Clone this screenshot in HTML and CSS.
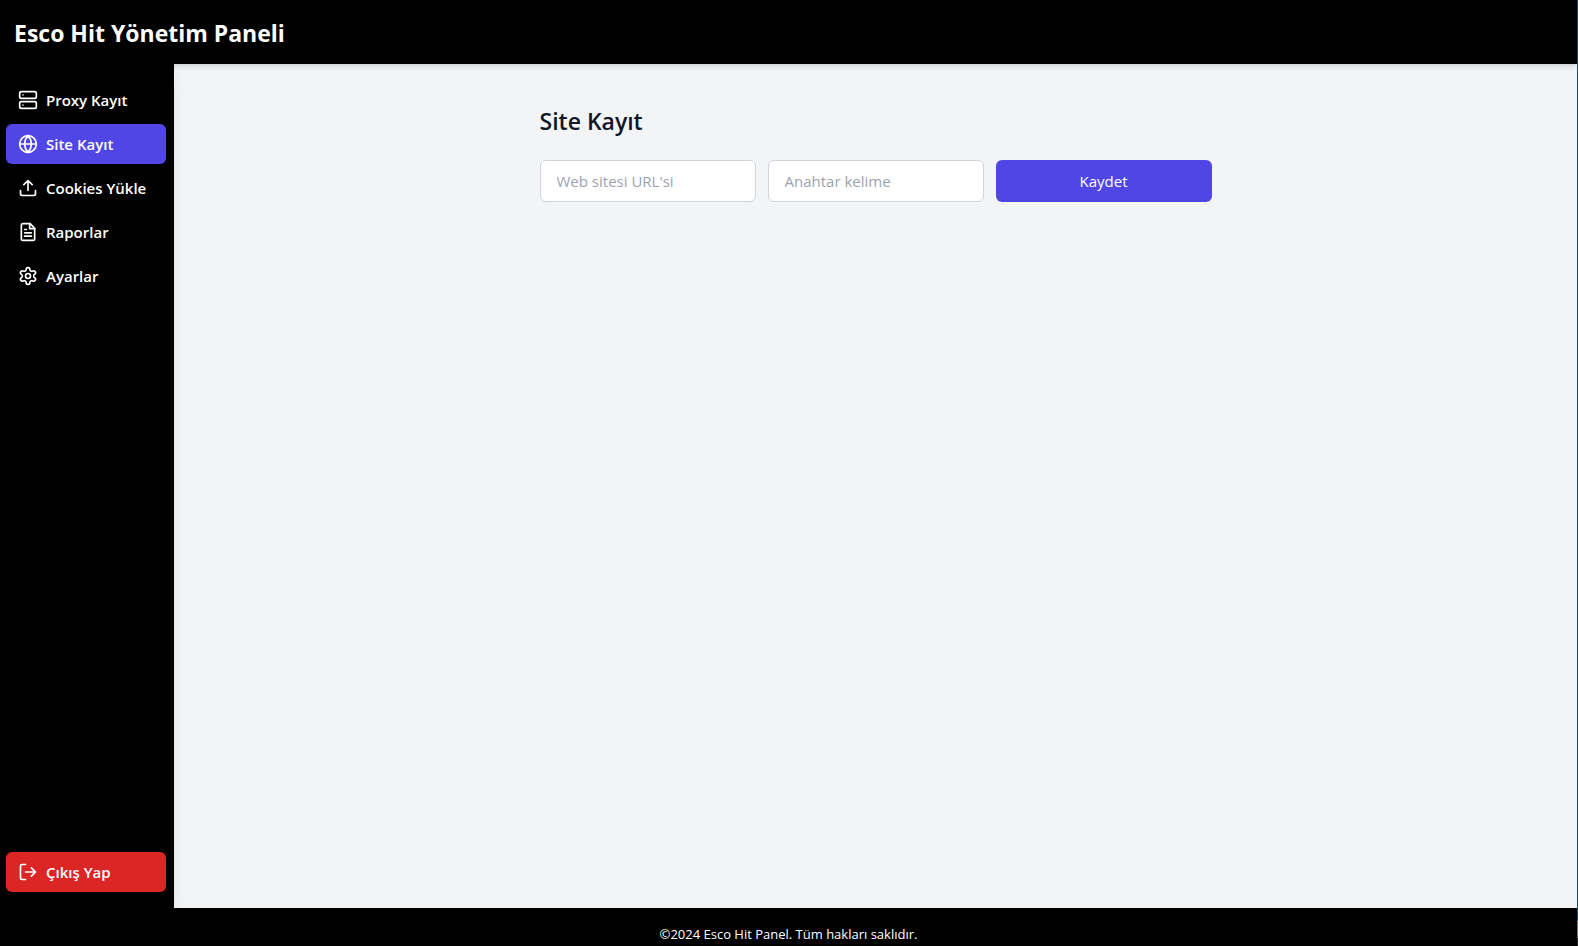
FILE: index.html
```html
<!DOCTYPE html>
<html lang="tr">
<head>
<meta charset="utf-8">
<title>Esco Hit Yönetim Paneli</title>
<link rel="stylesheet" href="styles.css">
</head>
<body>
<div class="app">
  <header class="header"><h1 class="brand">Esco Hit Yönetim Paneli</h1></header>
  <div class="body">
    <aside class="sidebar">
      <nav class="nav">
        <a class="item" href="#proxy"><svg class="icon" viewBox="0 0 24 24"><rect x="2" y="2" width="20" height="8" rx="2"/><rect x="2" y="14" width="20" height="8" rx="2"/><path d="M6 6h.01M6 18h.01"/></svg>Proxy Kayıt</a>
        <a class="item active" href="#site"><svg class="icon" viewBox="0 0 24 24"><circle cx="12" cy="12" r="10"/><path d="M12 2a14.5 14.5 0 0 0 0 20 14.5 14.5 0 0 0 0-20M2 12h20"/></svg>Site Kayıt</a>
        <a class="item" href="#cookies"><svg class="icon" viewBox="0 0 24 24"><path d="M21 15v4a2 2 0 0 1-2 2H5a2 2 0 0 1-2-2v-4M17 8l-5-5-5 5M12 3v12"/></svg>Cookies Yükle</a>
        <a class="item" href="#raporlar"><svg class="icon" viewBox="0 0 24 24"><path d="M14.5 2H6a2 2 0 0 0-2 2v16a2 2 0 0 0 2 2h12a2 2 0 0 0 2-2V7.5L14.5 2z"/><path d="M14 2v6h6M10 9H8M16 13H8M16 17H8"/></svg>Raporlar</a>
        <a class="item" href="#ayarlar"><svg class="icon" viewBox="0 0 24 24"><path d="M12.22 2h-.44a2 2 0 0 0-2 2v.18a2 2 0 0 1-1 1.73l-.43.25a2 2 0 0 1-2 0l-.15-.08a2 2 0 0 0-2.73.73l-.22.38a2 2 0 0 0 .73 2.73l.15.1a2 2 0 0 1 1 1.72v.51a2 2 0 0 1-1 1.74l-.15.09a2 2 0 0 0-.73 2.73l.22.38a2 2 0 0 0 2.73.73l.15-.08a2 2 0 0 1 2 0l.43.25a2 2 0 0 1 1 1.73V20a2 2 0 0 0 2 2h.44a2 2 0 0 0 2-2v-.18a2 2 0 0 1 1-1.73l.43-.25a2 2 0 0 1 2 0l.15.08a2 2 0 0 0 2.73-.73l.22-.39a2 2 0 0 0-.73-2.73l-.15-.08a2 2 0 0 1-1-1.74v-.5a2 2 0 0 1 1-1.74l.15-.09a2 2 0 0 0 .73-2.73l-.22-.38a2 2 0 0 0-2.73-.73l-.15.08a2 2 0 0 1-2 0l-.43-.25a2 2 0 0 1-1-1.73V4a2 2 0 0 0-2-2z"/><circle cx="12" cy="12" r="3"/></svg>Ayarlar</a>
      </nav>
      <button class="item logout" type="button"><svg class="icon" viewBox="0 0 24 24"><path d="M9 21H5a2 2 0 0 1-2-2V5a2 2 0 0 1 2-2h4M16 17l5-5-5-5M21 12H9"/></svg>Çıkış Yap</button>
    </aside>
    <main class="main">
      <section class="panel">
        <h2 class="title">Site Kayıt</h2>
        <form class="form">
          <input class="field" type="text" placeholder="Web sitesi URL'si" aria-label="Web sitesi URL'si">
          <input class="field" type="text" placeholder="Anahtar kelime" aria-label="Anahtar kelime">
          <button class="save" type="button">Kaydet</button>
        </form>
      </section>
    </main>
  </div>
  <footer class="footer">©2024 Esco Hit Panel. Tüm hakları saklıdır.</footer>
</div>
</body>
</html>
```
FILE: styles.css
```css
* { box-sizing: border-box; margin: 0; }
body {
  font-family: "Segoe UI", "Open Sans", "Noto Sans", sans-serif;
  font-size: 15px;
  line-height: 24px;
  color: #0f172a;
  background: #000;
}
.app {
  display: flex;
  flex-direction: column;
  height: 100vh;
  padding-right: 1px;
  background: linear-gradient(to top, #222 8px, #777 8px, #777 25px, #1d4a6b 25px);
}
.header {
  position: relative;
  z-index: 2;
  padding: 17px 14px 15px;
  background: #000;
  color: #fff;
  box-shadow: 0 4px 6px -1px rgba(0, 0, 0, 0.1), 0 2px 4px -2px rgba(0, 0, 0, 0.1);
}
.brand { font-size: 23px; line-height: 32px; font-weight: 700; }
.body { display: flex; flex: 1; min-height: 0; }
.sidebar {
  position: relative;
  z-index: 1;
  display: flex;
  flex-direction: column;
  justify-content: space-between;
  flex: 0 0 174px;
  padding: 16px 8px 16px 6px;
  background: #000;
  box-shadow: 0 10px 15px -3px rgba(0, 0, 0, 0.1);
}
.nav { display: flex; flex-direction: column; gap: 4px; }
.item {
  display: flex;
  align-items: center;
  gap: 8px;
  padding: 8px 12px;
  border: 0;
  border-radius: 6px;
  background: none;
  color: #fff;
  font: inherit;
  font-weight: 600;
  text-decoration: none;
}
.active { background: #4f46e5; }
.logout { background: #dc2626; }
.icon {
  width: 20px;
  height: 20px;
  fill: none;
  stroke: currentColor;
  stroke-width: 2;
  stroke-linecap: round;
  stroke-linejoin: round;
}
.main { flex: 1; padding: 41px 16px; background: #f3f4f6; }
.panel { max-width: 672px; margin: 0 auto; }
.title { margin-bottom: 23px; font-size: 23px; line-height: 32px; font-weight: 600; }
.form { display: grid; grid-template-columns: repeat(3, 1fr); gap: 12px; }
.field, .save { min-width: 0; height: 42px; padding: 8px 16px; border-radius: 6px; font: inherit; }
.field { border: 1px solid #d1d5db; background: #fff; color: #0f172a; }
.field::placeholder { color: #9ca3af; opacity: 1; }
.save { border: 0; background: #4f46e5; color: #fff; }
.footer {
  position: relative;
  z-index: 2;
  flex: none;
  height: 38px;
  padding: 16px 0 0;
  background: #000;
  color: #fff;
  font-size: 13px;
  line-height: 20px;
  text-align: center;
}
```
